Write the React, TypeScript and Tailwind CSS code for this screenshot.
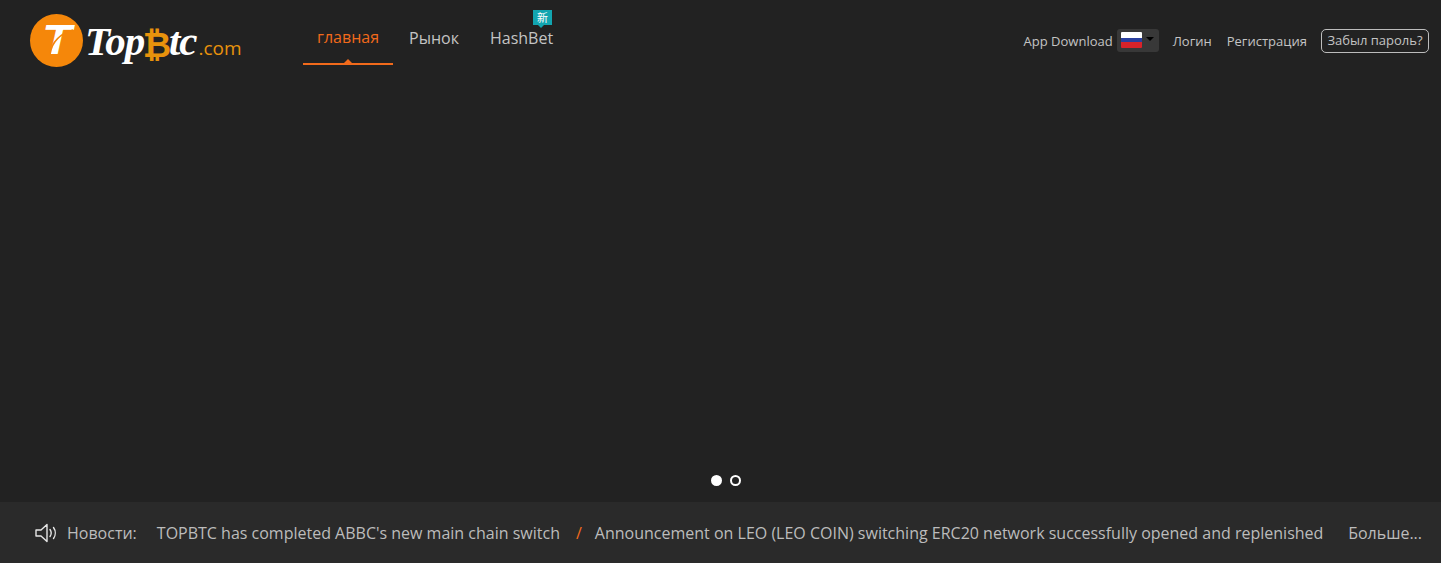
import { useState } from 'react'

const navItems = ['главная', 'Рынок', 'HashBet']

function Logo() {
  return (
    <div className="flex items-center w-[211px] h-[54px] shrink-0">
      {/* round badge */}
      <div className="relative w-[53px] h-[53px] rounded-full bg-[#f5870a] shrink-0 flex items-center justify-center">
        <span className="font-['Liberation_Sans',sans-serif] italic font-bold text-[42px] leading-none text-white scale-x-[1.15]">T</span>
        <svg className="absolute left-0 top-0" width="53" height="53" viewBox="0 0 53 53" fill="none">
          <path d="M20 40C22 28 29 20 43 16" stroke="#f5870a" strokeWidth="1.6" />
        </svg>
      </div>
      <div className="flex items-baseline mt-[2px] ml-[2px] font-['Liberation_Serif',serif] italic font-bold text-white text-[41px] leading-none tracking-[-1px] shrink-0">
        <span>Top</span>
        <span className="text-[#e8920c] text-[29px] not-italic font-['DejaVu_Sans',sans-serif] tracking-normal scale-[1.2] ml-[1px]">₿</span>
        <span>tc</span>
        <span className="font-['Open_Sans',sans-serif] not-italic font-normal text-[19px] text-[#e8920c] tracking-normal ml-[2px]">.com</span>
      </div>
    </div>
  )
}

function Nav() {
  return (
    <nav className="flex ml-[62px] h-[65px] font-['Open_Sans',sans-serif] text-[16px]">
      {navItems.map((item, i) => (
        <a
          key={item}
          className={
            i === 0
              ? 'relative flex items-center h-full px-[14px] pt-[11px] mr-[16px] font-medium text-[#f26a1b] border-b-2 border-[#f26a1b]'
              : 'relative flex items-center h-full pt-[11px] mr-[31px] text-[#c4c4c4]'
          }
        >
          {item}
          {i === 0 && (
            <span className="absolute left-1/2 -ml-[4px] bottom-0 w-0 h-0 border-x-[4px] border-x-transparent border-b-[4px] border-b-[#f26a1b]" />
          )}
          {item === 'HashBet' && (
            <span className="absolute top-0 right-[1px] mt-[10px] w-[19px] h-[15px] bg-[#12a5b0] text-white text-[11px] leading-[15px] text-center font-['Noto_Sans_CJK_SC',sans-serif]">
              新
              <span className="absolute left-[5px] -bottom-[3px] w-0 h-0 border-x-[3px] border-x-transparent border-t-[3px] border-t-[#12a5b0]" />
            </span>
          )}
        </a>
      ))}
    </nav>
  )
}

function FlagSelect() {
  return (
    <div className="flex items-center w-[42px] h-[23px] ml-[4px] -mt-[4px] bg-[#383838] rounded-[3px] pl-[4px]">
      <div className="w-[21px] h-[16px] flex flex-col rounded-[1px] overflow-hidden">
        <div className="flex-[6] bg-white" />
        <div className="flex-[4] bg-[#2a3f9e]" />
        <div className="flex-[6] bg-[#d8232a]" />
      </div>
      <span className="ml-[4px] -mt-[3px] w-0 h-0 border-x-[4px] border-x-transparent border-t-[4px] border-t-black" />
    </div>
  )
}

function SpeakerIcon() {
  return (
    <svg width="24" height="20" viewBox="0 0 24 20" fill="none" stroke="#e6e6e6" strokeWidth="1.4" strokeLinejoin="round" strokeLinecap="round">
      <path d="M1 7h5l6-5.500v17L6 13H1z" />
      <path d="M15 6.500c1.400 2 1.400 5 0 7" />
      <path d="M18.500 4.500c2.300 3.200 2.300 7.800 0 11" />
    </svg>
  )
}

export default function App() {
  const [slide] = useState(0)

  return (
    <div className="w-full h-[563px] flex flex-col bg-[#222222] overflow-hidden font-['Open_Sans',sans-serif]">
      <header className="flex items-start pl-[30px] pr-[12px] h-[78px] shrink-0">
        <div className="mt-[13px]">
          <Logo />
        </div>
        <Nav />
        <div className="ml-auto mt-[29px] flex items-center text-[13px] text-[#c4c4c4] h-[26px]">
          <span>App Download</span>
          <FlagSelect />
          <span className="ml-[14px]">Логин</span>
          <span className="ml-[15px]">Регистрация</span>
          <span className="ml-[14px] -mt-[2px] h-[24px] px-[5.5px] flex items-center border border-[#bdbdbd] rounded-[5px]">Забыл пароль?</span>
        </div>
      </header>

      {/* banner area, empty apart from the slider dots */}
      <div className="flex-1 flex items-end justify-center gap-[8px] pb-[16px] pl-[10px]">
        {[0, 1].map((i) => (
          <span
            key={i}
            className={
              i === slide
                ? 'w-[11px] h-[11px] rounded-full bg-white border-2 border-white'
                : 'w-[11px] h-[11px] rounded-full border-2 border-white'
            }
          />
        ))}
      </div>

      <div className="h-[61px] shrink-0 bg-[#2a2a2a] flex items-center pl-[35px] pr-[19px] text-[16px] text-[#bcbcbc]">
        <SpeakerIcon />
        <span className="ml-[8px]">Новости:</span>
        <span className="ml-[20px]">TOPBTC has completed ABBC's new main chain switch</span>
        <span className="ml-[16px] mr-[13px] text-[#f26a1b]">/</span>
        <span>Announcement on LEO (LEO COIN) switching ERC20 network successfully opened and replenished</span>
        <span className="ml-auto">Больше...</span>
      </div>
    </div>
  )
}
